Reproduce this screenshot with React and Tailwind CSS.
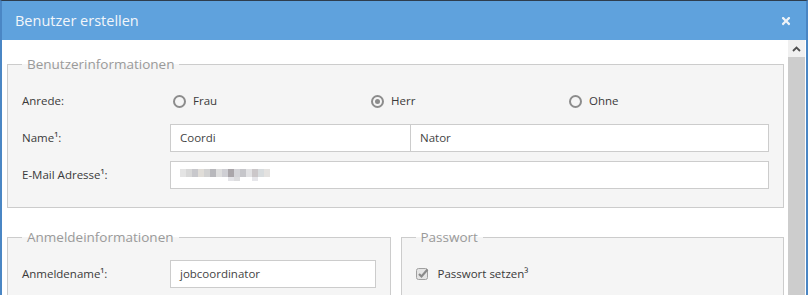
import { FaTimes } from 'react-icons/fa';

const font = { fontFamily: '"Open Sans", "Liberation Sans", sans-serif' };

function Radio({ label, checked }) {
  return (
    <label className="w-[198px] flex items-center gap-[7px] pl-[3px]">
      <span className="w-[13px] h-[13px] rounded-full border-2 border-[#8c8c8c] flex items-center justify-center bg-[#f5f5f5]">
        {checked && <span className="w-[5px] h-[5px] rounded-full bg-[#8c8c8c]" />}
      </span>
      <span className="text-[11.5px] text-[#3a3a3a]">{label}</span>
    </label>
  );
}

function Row({ label, children }) {
  return (
    <div className="flex items-center h-[28px]">
      <div className="w-[148px] text-[11.5px] text-[#3a3a3a]">{label}</div>
      <div className="flex flex-1">{children}</div>
    </div>
  );
}

function Input({ value, className = '' }) {
  return (
    <div className={`h-[28px] bg-white border border-[#cccccc] flex items-center px-[9px] text-[11.5px] text-[#444] ${className}`}>
      {value}
    </div>
  );
}

function Blurred() {
  const blocks = ['#e4e4e4', '#d8d8d8', '#c8c8cc', '#e0ddd8', '#d2d2d2', '#b8b8bc', '#dedede', '#cfcfd4', '#aaa6aa', '#d4d4d8', '#c6c6ca', '#e2e2e4', '#cbc7c9', '#d8dcde', '#e4e2e0'];
  return (
    <div className="flex flex-col">
      <div className="flex">
        {blocks.map((c, i) => (
          <span key={i} className="w-[6px] h-[8px]" style={{ background: c }} />
        ))}
      </div>
      <div className="flex pl-[48px]">
        <span className="w-[6px] h-[4px] bg-[#e4e4e8]" />
        <span className="w-[6px] h-[4px] bg-[#dcdcde]" />
        <span className="w-[12px] h-[4px]" />
        <span className="w-[6px] h-[4px] bg-[#e6e6ea]" />
      </div>
    </div>
  );
}

function Box({ title, className = '', children }) {
  return (
    <fieldset className={`border border-[#cccccc] bg-[#f5f5f5] px-[14px] ${className}`}>
      <legend className="px-[5px] text-[13.5px] leading-[20px] text-[#9a9a9a]">{title}</legend>
      {children}
    </fieldset>
  );
}

export default function App() {
  return (
    <div style={font} className="w-[808px] h-[295px] overflow-hidden bg-white border-t border-[#2e3d4d] border-l-[2px] border-l-[#4a86c4] border-r-[2px] border-r-[#4a86c4] flex flex-col">
      <div className="h-[39px] bg-[#5fa2dd] flex items-center justify-between pl-[13px] pr-[14px]">
        <h1 className="text-[14.5px] text-[#f2f6fa]">Benutzer erstellen</h1>
        <FaTimes className="text-[#eef3f8] w-[12px] h-[12px]" />
      </div>
      <div className="flex flex-1 min-h-0 pl-[5px]">
        <div className="flex-1 flex flex-col gap-[19px] pr-[4px] pt-[14px]">
          <Box title="Benutzerinformationen" className="pt-[13px] pb-[18px]">
            <div className="flex flex-col gap-[9px]">
              <Row label="Anrede:">
                <Radio label="Frau" />
                <Radio label="Herr" checked />
                <Radio label="Ohne" />
              </Row>
              <Row label="Name¹:">
                <Input value="Coordi" className="w-[241px]" />
                <Input value="Nator" className="flex-1 -ml-px" />
              </Row>
              <Row label="E-Mail Adresse¹:">
                <Input value={<Blurred />} className="flex-1" />
              </Row>
            </div>
          </Box>
          <div className="grid grid-cols-2 gap-[10px]">
            <Box title="Anmeldeinformationen" className="pt-[13px] pb-[18px]">
              <Row label="Anmeldename¹:">
                <Input value="jobcoordinator" className="flex-1 bg-white" />
              </Row>
            </Box>
            <Box title="Passwort" className="pt-[13px] pb-[18px]">
              <div className="flex items-center h-[28px] gap-[8px]">
                <svg width="14" height="14" viewBox="0 0 14 14">
                  <rect x="0.5" y="1.5" width="11" height="11" rx="2" fill="#e4e4e4" stroke="#a0a0a0" />
                  <path d="M3 7 L5.5 9.5 L11.5 2.5" fill="none" stroke="#8a8a8a" strokeWidth="2.2" />
                </svg>
                <span className="text-[11.5px] text-[#3a3a3a]">Passwort setzen³</span>
              </div>
            </Box>
          </div>
        </div>
        <div className="w-[17px] flex flex-col mr-[1px]">
          <div className="h-[17px] bg-[#f0f0f0] flex items-center justify-center">
            <svg width="9" height="6" viewBox="0 0 9 6">
              <path d="M1 5 L4.5 1.5 L8 5" fill="none" stroke="#505050" strokeWidth="1.8" />
            </svg>
          </div>
          <div className="flex-1 bg-[#cdcdcd]" />
        </div>
      </div>
    </div>
  );
}
